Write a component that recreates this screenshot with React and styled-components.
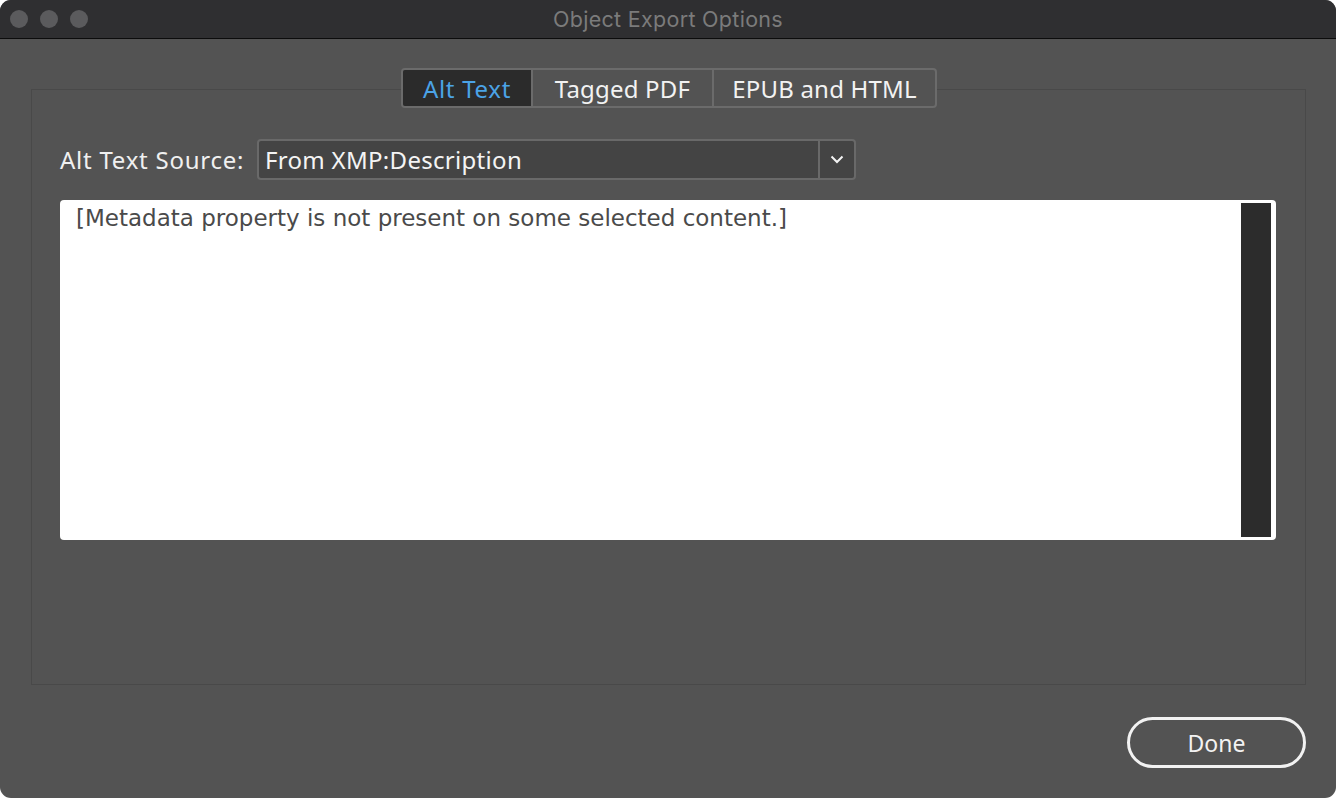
import React from 'react';
import styled, { createGlobalStyle } from 'styled-components';

const Global = createGlobalStyle`
  html, body { margin: 0; padding: 0; background: #ffffff; }
  body { width: 1336px; height: 798px; overflow: hidden; }
`;

const Window = styled.div`
  width: 1336px;
  height: 798px;
  border-radius: 11px;
  overflow: hidden;
  background: #535353;
  display: flex;
  flex-direction: column;
  font-family: "Noto Sans", "Open Sans", sans-serif;
`;

const TitleBar = styled.div`
  height: 38px;
  flex: none;
  background: #2f2f31;
  border-bottom: 1px solid #0c0c0c;
  display: flex;
  align-items: center;
  position: relative;
  padding-left: 10px;
  gap: 12px;
`;

const Light = styled.span`
  width: 18px;
  height: 18px;
  border-radius: 50%;
  background: #5b5b5d;
`;

const Title = styled.div`
  position: absolute;
  left: 0;
  right: 0;
  text-align: center;
  color: #7b7b7b;
  font-family: Inter, "Noto Sans", sans-serif;
  font-size: 21.5px;
  letter-spacing: 0.3px;
`;

const Body = styled.div`
  flex: 1;
  display: flex;
  flex-direction: column;
  padding: 29px 30px 30px 31px;
`;

const Group = styled.div`
  position: relative;
  height: 596px;
  margin-top: 21px;
  border: 1px solid #494949;
  box-sizing: border-box;
  padding: 49px 29px 0 28px;
`;

const Tabs = styled.div`
  position: absolute;
  top: -22px;
  left: 369px;
  display: flex;
  border: 2px solid #6b6b6b;
  border-radius: 4px;
  background: #535353;
  overflow: hidden;
`;

const Tab = styled.div`
  height: 36px;
  display: flex;
  align-items: center;
  justify-content: center;
  width: ${p => p.w}px;
  font-size: 24px;
  letter-spacing: ${p => (p.active ? '0.7px' : '0.2px')};
  color: ${p => (p.active ? '#4ba3e6' : '#f2f2f2')};
  background: ${p => (p.active ? '#2b2b2b' : 'transparent')};
  border-left: ${p => (p.first ? 'none' : '2px solid #6b6b6b')};
`;

const Row = styled.div`
  display: flex;
  align-items: center;
  gap: 13px;
`;

const Label = styled.div`
  width: 184px;
  color: #f0f0f0;
  font-size: 24px;
  letter-spacing: 0.75px;
  white-space: nowrap;
`;

const Select = styled.div`
  width: 599px;
  height: 41px;
  box-sizing: border-box;
  border: 2px solid #696969;
  border-radius: 4px;
  background: #444444;
  display: flex;
  align-items: stretch;
`;

const SelectValue = styled.div`
  flex: 1;
  display: flex;
  align-items: center;
  padding-left: 6px;
  color: #f4f4f4;
  font-size: 24px;
  letter-spacing: 0.3px;
`;

const SelectButton = styled.div`
  width: 34px;
  border-left: 2px solid #696969;
  display: flex;
  align-items: center;
  justify-content: center;
`;

const TextBox = styled.div`
  margin-top: 20px;
  height: 340px;
  background: #ffffff;
  border-radius: 4px;
  display: flex;
  padding: 3px 5px 3px 0;
  box-sizing: border-box;
`;

const Text = styled.div`
  flex: 1;
  padding: 2px 0 0 16px;
  color: #4a4a4a;
  font-family: "DejaVu Sans", Verdana, sans-serif;
  font-size: 23px;
`;

const Scroll = styled.div`
  width: 30px;
  background: #2c2c2c;
`;

const Footer = styled.div`
  display: flex;
  justify-content: flex-end;
  margin-top: 32px;
`;

const Done = styled.button`
  width: 179px;
  height: 51px;
  border: 3px solid #f2f2f2;
  border-radius: 26px;
  background: transparent;
  color: #f2f2f2;
  font-family: "Noto Sans", sans-serif;
  font-size: 23px;
  padding: 0;
`;

export default function App() {
  return (
    <>
      <Global />
      <Window>
        <TitleBar>
          <Light />
          <Light />
          <Light />
          <Title>Object Export Options</Title>
        </TitleBar>
        <Body>
          <Group>
            <Tabs>
              <Tab w={128} active first>Alt Text</Tab>
              <Tab w={179}>Tagged PDF</Tab>
              <Tab w={221}>EPUB and HTML</Tab>
            </Tabs>
            <Row>
              <Label>Alt Text Source:</Label>
              <Select>
                <SelectValue>From XMP:Description</SelectValue>
                <SelectButton>
                  <svg width="14" height="9" viewBox="0 0 14 9">
                    <path d="M1.5 1.5 L7 7 L12.5 1.5" fill="none" stroke="#f4f4f4" strokeWidth="2" />
                  </svg>
                </SelectButton>
              </Select>
            </Row>
            <TextBox>
              <Text>[Metadata property is not present on some selected content.]</Text>
              <Scroll />
            </TextBox>
          </Group>
          <Footer>
            <Done>Done</Done>
          </Footer>
        </Body>
      </Window>
    </>
  );
}
